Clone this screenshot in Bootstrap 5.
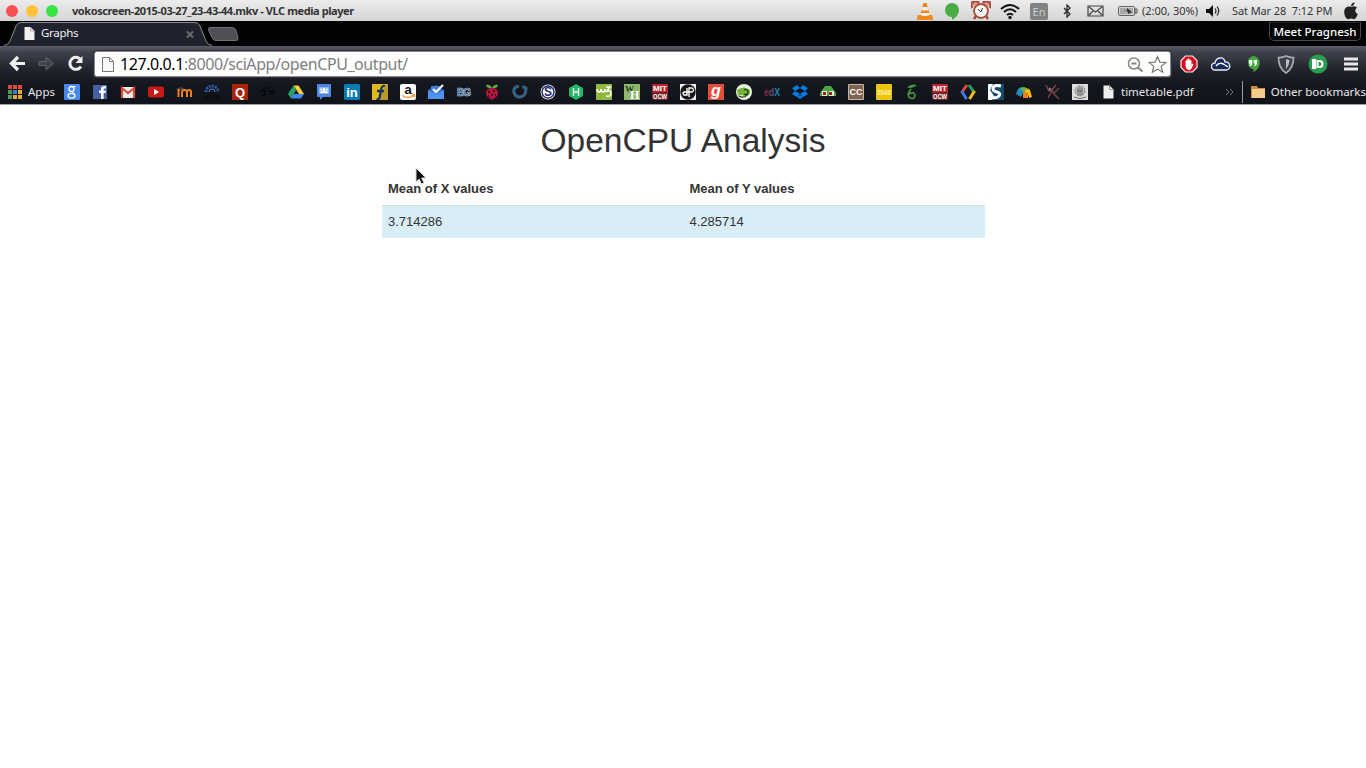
<!DOCTYPE html>
<html lang="en">
<head>
<meta charset="utf-8">
<title>Graphs</title>
<link href="https://cdn.jsdelivr.net/npm/bootstrap@5.3.0/dist/css/bootstrap.min.css" rel="stylesheet">
<style>
body{font-family:"Liberation Sans",Arial,sans-serif;font-size:13px;color:#333;background:#fff;overflow:hidden}
svg{display:block;flex:none}
.ui{font-family:"Noto Sans","Open Sans",sans-serif;white-space:nowrap}
.ui span{line-height:16px}
.titlebar{height:21px;background:linear-gradient(#ececec,#d5d5d5);color:#333}
.titlebar .caption{font-size:11px;font-weight:700;letter-spacing:-.42px;margin-left:14px}
.dot{width:12px;height:12px;border-radius:50%;margin-right:8px}
.tray{font-size:11px}
.tabstrip{height:25px;background:#020303}
.tab-active{width:212px;height:25px}
.tab-label{position:absolute;left:41px;top:4px;font-size:11.5px;letter-spacing:-.3px;color:#f2f2f2}
.user{height:19px;width:92px;margin-right:5px;border:1px solid #45474a;border-top-color:#26282b;border-radius:0 0 5px 5px;color:#fff;font-size:11.5px;font-weight:500}
.toolbar-area{height:59px;background:linear-gradient(#5c5d67,#3f414c 6px,#24262f 22px,#15171f 38px,#11131b);border-bottom:1px solid #a3a3a6}
.address{margin-left:10px;margin-top:5px;width:1077px;height:26px;background:#fff;border:1px solid #85868b;border-radius:3px;box-shadow:0 0 0 1px #30323a}
.address .url{font-size:16px;color:#808080;letter-spacing:-.43px;line-height:24px}
.address b{font-weight:400;color:#000}
.bookmarks{height:24px;color:#e8e8e8;font-size:11.5px}
.icons{gap:12px;margin-left:12px}
.sheet{width:603px;margin-top:17px}
.sheet h1{font-size:33.5px;line-height:37px;font-weight:400;letter-spacing:0;margin-bottom:13px}
.means{table-layout:fixed;--bs-table-bg:transparent;color:#333;line-height:18px;margin:0}
.means th,.means td{padding:7px 6.5px;border:0;color:#333}
.means th{height:33px}
.means td{background:#d9edf7;border-top:1px solid #cddfe7;height:33px}
.pointer{position:absolute;left:415px;top:167px}
text{font-family:"Liberation Sans",sans-serif;font-weight:700}
</style>
</head>
<body>
<header class="ui">
<div class="titlebar d-flex align-items-center">
  <div class="dot" style="background:#f84f55;margin-left:6px"></div><div class="dot" style="background:#fdc437"></div><div class="dot me-0" style="background:#35e545"></div>
  <span class="caption" id="cap">vokoscreen-2015-03-27_23-43-44.mkv - VLC media player</span>
  <div class="tray d-flex align-items-center ms-auto">
    <svg width="18" height="20" viewBox="0 0 18 20"><path d="M2 14h14l1.5 5H.5z" fill="#f18a1b"/><path d="M7.5 2h3l3.7 13q-5 2.5-10.400 0z" fill="#ee8322"/><path d="M6.500 6h5l1 3.500h-7zM4.600 12h8.800l.5 2q-5 2-9.800 0z" fill="#f5f1ea"/></svg>
    <svg style="margin-left:10px" width="16" height="20" viewBox="0 0 16 20"><path d="M8 2a7 7 0 0 1 7 7c0 5-4 8-7 10v-3A7 7 0 0 1 8 2" fill="#4aac43"/></svg>
    <svg style="margin-left:11px" width="20" height="20" viewBox="0 0 20 20"><path d="M1 7a4 4 0 0 1 7-5M12 2a4 4 0 0 1 7 5M5 15l-2 3M15 15l2 3" stroke="#a64b3c" stroke-width="2.500" fill="#d99b8c"/><circle cx="10" cy="10" r="7" fill="#f9f5f3" stroke="#a84a3d" stroke-width="1.800"/><path d="M7 8l3 3 1.500-4" stroke="#333" fill="none"/></svg>
    <svg style="margin-left:9px" width="20" height="18" viewBox="0 0 20 18"><g fill="none" stroke="#111" stroke-width="2"><path d="M1 7q9-8 18 0M4 10q6-5.500 12 0M7 13q3-2.500 6 0"/></g><circle cx="10" cy="15.500" r="1.700" fill="#111"/></svg>
    <svg style="margin-left:10px" width="18" height="18" viewBox="0 0 18 18"><rect width="18" height="17" y="1" rx="2" fill="#828282"/><text x="9" y="13.500" font-size="11" text-anchor="middle" fill="#ccc" style="font-weight:400;font-family:'Noto Sans'">En</text></svg>
    <svg style="margin-left:15px" width="8" height="14" viewBox="0 0 8 14"><path d="M1 4l6 6-3 3V1l3 3-6 6" fill="none" stroke="#2b2b2b" stroke-width="1.300"/></svg>
    <svg style="margin-left:16px" width="17" height="12" viewBox="0 0 17 12"><path d="M1 1h15v10H1zM2 2l6.500 5L15 2M2 10l4-4M15 10l-4-4" fill="none" stroke="#444" stroke-width="1.200"/></svg>
    <svg style="margin-left:14px" width="20" height="10" viewBox="0 0 20 10"><rect x=".6" y=".6" width="16" height="8.800" rx="1" fill="none" stroke="#555"/><path d="M17 3h2v4h-2z" fill="none" stroke="#555"/><path d="M2 2h13v6H2z" fill="#aaa"/><path d="M4 3l5 2V2l5 4-4 2V6z" fill="#333"/></svg>
    <span id="bat" style="margin-left:4px;width:64px">(2:00, 30%)</span>
    <svg width="14" height="12" viewBox="0 0 14 12"><path d="M0 4h3l4-4v12L3 8H0z" fill="#111"/><path d="M9 3.500q2 2.500 0 5M11 1.500q3.500 4.500 0 9" fill="none" stroke="#222" stroke-width="1.200"/></svg>
    <span id="clk" style="margin-left:12px;width:111px;letter-spacing:-.1px">Sat Mar 28&nbsp; 7:12 PM</span>
    <svg style="margin-right:7px" width="16" height="18" viewBox="0 0 16 18"><path d="M8.500 5c2-1.200 4-1 5.500.8-2.500 1.700-2.200 5 .8 6.200C13.500 15.500 12 18 10 17c-1.500-.7-2.300-.6-3.700 0C3 18 1 13 1.200 9.500 1.500 5 5 3.800 8.500 5M8 4.200C8 2 9.500.5 11.500.2 11.600 2.500 10 4.200 8 4.200" fill="#222"/></svg>
  </div>
</div>
<div class="tabstrip d-flex align-items-start">
  <div class="tab-active position-relative">
    <svg width="212" height="25" viewBox="0 0 212 25"><path d="M4 25Q8 25 10 20L16 5Q17.500 1.500 21 1.500H195Q198.500 1.500 200 5L206 20Q208 25 212 25z" fill="#20232e"/><path d="M4 24.500Q8 24.500 10 20L16 5Q17.500 1.500 21 1.500H195Q198.500 1.500 200 5L206 20Q208 24.500 212 24.500" fill="none" stroke="#8b8c91"/><path d="M24.500 6h6l4 4v9h-10z" fill="#f1f1f1"/><path d="M30.500 6v4h4" fill="none" stroke="#aaa"/><path d="M187 10.500l6 6M193 10.500l-6 6" stroke="#696b72" stroke-width="2"/></svg>
    <span class="tab-label">Graphs</span>
  </div>
  <svg style="margin-left:-5px" width="32" height="25" viewBox="0 0 32 25"><path d="M3 6.500h22q3 0 4 3l2 7q.5 3-2 3H9q-3 0-4-3L1.500 9q-.5-2.500 1.500-2.500" fill="#505157" stroke="#707176"/></svg>
  <div class="user d-flex align-items-center justify-content-center ms-auto" style="margin-top:1px"><span id="usr">Meet Pragnesh</span></div>
</div>
<div class="toolbar-area">
  <div class="d-flex align-items-start" style="height:34px">
    <svg style="margin:9px 0 0 9px" width="17" height="17" viewBox="0 0 17 17"><path d="M9 2L2.500 8.500 9 15M3 8.500h13" fill="none" stroke="#eee" stroke-width="3.200"/></svg>
    <svg style="margin:9px 0 0 12px" width="17" height="17" viewBox="0 0 17 17"><path d="M1 6.500h7V2l7.500 6.500L8 15v-4.500H1z" fill="#3f424b" stroke="#62646c"/></svg>
    <svg style="margin:9px 0 0 12px" width="17" height="17" viewBox="0 0 17 17"><path d="M13.500 4.500A6 6 0 1 0 14 11.500" fill="none" stroke="#eee" stroke-width="3"/><path d="M15.500 1v7h-7z" fill="#eee"/></svg>
    <div class="address d-flex align-items-center">
      <svg style="margin-left:7px" width="12" height="15" viewBox="0 0 12 15"><path d="M.5.5h7l4 4v10H.5zM7.500.5v4h4" fill="#f7f7f7" stroke="#777"/></svg>
      <span class="url" id="url" style="margin-left:6px"><b>127.0.0.1</b>:8000/sciApp/openCPU_output/</span>
      <svg class="ms-auto" width="17" height="17" viewBox="0 0 17 17"><circle cx="7" cy="7.500" r="5.500" fill="none" stroke="#858585" stroke-width="1.500"/><path d="M4.500 7.500h5M11 11.500l4.500 4" stroke="#858585" stroke-width="2"/></svg>
      <svg style="margin:0 3px 0 4px" width="19" height="19" viewBox="0 0 19 19"><path d="M9.500 1.500l2.300 5.600 6 .4-4.600 3.900 1.500 5.900-5.200-3.200-5.200 3.200 1.500-5.900L1.200 7.500l6-.4z" fill="#fff" stroke="#777" stroke-width="1.200"/></svg>
    </div>
    <svg style="margin:9px 0 0 9px" width="18" height="18" viewBox="0 0 18 18"><path d="M5.500 1h7L17 5.500v7L12.500 17h-7L1 12.500v-7z" fill="#d60f1c" stroke="#f4e4e4" stroke-width="1.200"/><path d="M5.500 9V6h1V4.500h1.300V3.500h1.300v1h1.200v1h1.200V10l1-1.500 1 .5-2 4.500-1.500 1.500H8L6 13z" fill="#fff"/></svg>
    <svg style="margin:11px 0 0 13px" width="20" height="14" viewBox="0 0 20 14"><path d="M4 13a3.500 3.500 0 0 1 0-7C5 0 13-1 14 5c5-.5 7 7 1.500 8z" fill="#16295c" stroke="#e8ebf3" stroke-width="1.300"/><path d="M5 9q4-5 9-1l3 2" fill="none" stroke="#fff" stroke-width="1.500"/></svg>
    <svg style="margin:9px 0 0 14px" width="16" height="18" viewBox="0 0 16 18"><path d="M8 1a6.800 6.800 0 0 1 6.800 6.800c0 5-4 8-6.300 9.500v-3A6.800 6.800 0 0 1 8 1" fill="#44a83b"/><path d="M4 5h3.200v4L5.500 11H4.300L5.500 8.500H4zM8.800 5H12v4l-1.700 2H9.100l1.200-2.500H8.800z" fill="#fff"/></svg>
    <svg style="margin:9px 0 0 16px" width="18" height="19" viewBox="0 0 18 19"><path d="M9 1q4 1.800 7.500 1.500 0 11-7.500 15.500Q1.500 13.500 1.500 2.500 5 2.800 9 1z" fill="#3b3e46" stroke="#aaacb0" stroke-width="1.700"/><path d="M9 4l3.500 1q-.5 6-3.500 9z" fill="#b9bbc0"/></svg>
    <svg style="margin:8px 0 0 13px" width="20" height="20" viewBox="0 0 20 20"><circle cx="10" cy="10" r="9.500" fill="#2a9d4f"/><path d="M5 6h2v8H5zM9.500 7h2a3 3 0 0 1 0 6h-2z" fill="none" stroke="#fff" stroke-width="2"/></svg>
    <svg style="margin:11px 0 0 16px" width="14" height="14" viewBox="0 0 14 14"><path d="M0 2h14M0 7h14M0 12h14" stroke="#e7e7e8" stroke-width="3"/></svg>
  </div>
  <div class="bookmarks d-flex align-items-center">
    <svg style="margin-left:8px" width="14" height="14" viewBox="0 0 14 14"><path d="M0 0h4v4H0zM5 0h4v4H5zM10 0h4v4h-4z" fill="#df493f"/><path d="M0 5h4v4H0zM0 10h4v4H0z" fill="#4c9c56"/><path d="M5 5h4v4H5z" fill="#3a7ed5"/><path d="M10 5h4v4h-4zM5 10h4v4H5zM10 10h4v4h-4z" fill="#e5ae30"/></svg>
    <span id="apps" style="margin-left:6px;width:24px">Apps</span>
    <div class="icons d-flex">
      <svg width="16" height="16"><rect width="16" height="16" rx="1" fill="#4787ed"/><circle cx="7.500" cy="5" r="2.500" fill="none" stroke="#fff" stroke-width="1.300"/><ellipse cx="7.500" cy="11.700" rx="3.500" ry="2.400" fill="none" stroke="#fff" stroke-width="1.300"/><path d="M8 2.500h4M8 7.500q2 1 2 2" stroke="#fff" fill="none"/></svg>
      <svg width="16" height="16"><rect x="1" y="1" width="14" height="14" fill="#4460a0"/><path d="M9 15V9H7V6.500h2V5q0-3 3-3h2v2.500h-1.500q-1 0-1 1v1H14L13.600 9h-2v6z" fill="#fff"/></svg>
      <svg width="16" height="16"><path d="M1 3h14v11H1z" fill="#ededed"/><path d="M2 14V4l6 5 6-5v10" fill="none" stroke="#d84a3e" stroke-width="2.200"/></svg>
      <svg width="16" height="16"><rect y="2.500" width="16" height="11" rx="2" fill="#c51a18"/><path d="M6 5l5 3-5 3z" fill="#fff"/></svg>
      <svg width="16" height="16"><path d="M0 5l5-2 4 2-6 2" fill="#444"/><path d="M2.500 13V5M6 13V8q0-2 2.500-2T11 8v5M11 8q0-2 2-2t2 2v5" fill="none" stroke="#ed7f22" stroke-width="2"/></svg>
      <svg width="16" height="16"><path d="M2 8a6 6 0 0 1 12 0" fill="none" stroke="#2a57a3" stroke-width="3" stroke-dasharray="2 1"/><path d="M5 8a3 3 0 0 1 6 0" fill="none" stroke="#6289c7"/><text x="8" y="16" font-size="8" text-anchor="middle" textLength="15" fill="#07080b">IITB</text></svg>
      <svg width="16" height="16"><path d="M0 0h16v16H0z" fill="#a82409"/><text x="8" y="12.500" font-size="13" text-anchor="middle" fill="#fff">Q</text></svg>
      <svg width="16" height="16"><path d="M2 4h7M0 8l5-2v5H1M8 7h3v4M13 5v6" fill="none" stroke="#08090c" stroke-width="1.500"/></svg>
      <svg width="16" height="16"><path d="M5.500 1.500h5L16 10h-5z" fill="#f8ce3b"/><path d="M5.500 1.500L8 6l-5 8.500L0 10z" fill="#23a269"/><path d="M5.500 10H16l-3 4.500H3z" fill="#4386ed"/></svg>
      <svg width="16" height="16"><path d="M1 0h14v13H7l-3 3v-3H1z" fill="#4b86e3"/><path d="M3 3h10v7H3z" fill="#8bb5f2"/><path d="M4 9q0-2 2-2 2-2 4 0 2 0 2 2z" fill="#fff"/><circle cx="5" cy="5.500" r="1" fill="#fff"/><circle cx="8" cy="5" r="1.300" fill="#fff"/><circle cx="11" cy="5.500" r="1" fill="#fff"/></svg>
      <svg width="16" height="16"><rect width="16" height="16" rx="1.500" fill="#087bb2"/><text x="8" y="13" font-size="13" text-anchor="middle" fill="#fff">in</text></svg>
      <svg width="16" height="16"><path d="M0 0h16v16H0z" fill="#dfb91d"/><path d="M15 0L5 16h11V0z" fill="#b99a22"/><path d="M13 2q-3-1-4 4L7.500 14q-1 2-3 1M5 7h7" fill="none" stroke="#173264" stroke-width="2.300"/></svg>
      <svg width="16" height="16"><rect width="16" height="16" rx="2" fill="#fff"/><text x="8" y="10" font-size="13" text-anchor="middle" fill="#111">a</text><path d="M2 11.500q6 4 12 0M11.500 11h3v2" fill="none" stroke="#f4982c" stroke-width="1.500"/></svg>
      <svg width="16" height="16"><path d="M0 6l8-5 8 5v9H0z" fill="#2663bd"/><path d="M3 2h10v9H3z" fill="#3f7cd5"/><path d="M0 6l8 5 8-5v9H0z" fill="#4f92ef"/><path d="M5 5l3 3 7-7" fill="none" stroke="#fff" stroke-width="2"/></svg>
      <svg width="16" height="16"><text x="1" y="12" font-size="10" textLength="14" fill="#173757" stroke="#a8c6df" stroke-width=".7">BG</text></svg>
      <svg width="16" height="16"><path d="M8 4Q3 5 2 1q4-1 6 3 2-4 6-3-1 4-6 3" fill="#63aa3f"/><path d="M8 4c8 0 7 8 3 10l-3 2-3-2C1 12 0 4 8 4" fill="#b71340"/><path d="M4 8h2M9 7h2M7 11h2M11 11h1M4 12h1" stroke="#3b0717" stroke-width="2"/></svg>
      <svg width="16" height="16"><path d="M7 2.500H5Q1 4 2 9q3 6 9 3 3-2 3-8-1-1-4-1" fill="none" stroke="#39627e" stroke-width="3"/></svg>
      <svg width="16" height="16"><circle cx="8" cy="8" r="7.500" fill="#fff"/><circle cx="8" cy="8" r="6" fill="#fff" stroke="#252c72" stroke-width="1.500"/><text x="8" y="12.200" font-size="12" text-anchor="middle" fill="#252c72">S</text></svg>
      <svg width="16" height="16"><path d="M8 0l7 4v8l-7 4-7-4V4z" fill="#22b566"/><path d="M5.500 4v8M10.500 4v8M5.500 8h5" stroke="#e9fff0" stroke-width="1.500"/></svg>
      <svg width="16" height="16"><path d="M0 0h16v16H0z" fill="#90b83e"/><path d="M1 5q0 3 2 3t2-3q0 3 2 3t2-3M10 3h4l-3 4q4-1 4 2.500T10 12" fill="none" stroke="#fff" stroke-width="1.600"/></svg>
      <svg width="16" height="16"><path d="M0 0h16v16H0z" fill="#8eb76c"/><text x="1" y="8" font-size="9" fill="#263c22" style="font-family:'Liberation Serif'">W</text><text x="6" y="15" font-size="12" fill="#fff" style="font-family:'Liberation Serif'">H</text></svg>
      <svg width="16" height="16"><path d="M0 0h16v8H0z" fill="#ba242a"/><path d="M0 8h16v8H0z" fill="#77272b"/><text x="1" y="7" font-size="8" textLength="14" lengthAdjust="spacingAndGlyphs" fill="#fff">MIT</text><text x="1" y="15" font-size="8" textLength="14" lengthAdjust="spacingAndGlyphs" fill="#fff">OCW</text></svg>
      <svg width="16" height="16"><path d="M0 0h16v16H0z" fill="#ededed"/><circle cx="8" cy="8" r="7.700" fill="#171717"/><path d="M7 4v7H4q-2-2 0-3h4M9 13V4h3q3 2 0 4H8" fill="none" stroke="#fff" stroke-width="1.400"/></svg>
      <svg width="16" height="16"><path d="M0 0h16v16H0z" fill="#e44e36"/><text x="8" y="12" font-size="16" font-style="italic" text-anchor="middle" fill="#fff">g</text></svg>
      <svg width="16" height="16"><circle cx="8" cy="8" r="8" fill="#eef1e6"/><path d="M1 6q7-5 13 0v3q-2 4-6 3-3-2-6 0" fill="#74b537"/><path d="M8 6a2.500 2.500 0 1 1 0 4M3 12q5 3 9-2" fill="none" stroke="#1d3c17" stroke-width="1.200"/></svg>
      <svg width="16" height="16"><text x="0" y="12" font-size="11" textLength="16" lengthAdjust="spacingAndGlyphs"><tspan fill="#8b2451">e</tspan><tspan fill="#5b5160">d</tspan><tspan fill="#1587be">X</tspan></text></svg>
      <svg width="16" height="16"><path d="M5 1l3 3-5 3-3-3zM11 1L8 4l5 3 3-3zM3 7L0 10l5 3 3-3zM13 7l3 3-5 3-3-3zM5 13l3-2 3 2-3 2z" fill="#087ce6"/></svg>
      <svg width="16" height="16"><path d="M5 2h6l5 7v3H0V9z" fill="#46a940"/><path d="M2 7h5v5H2zM9 7h5v5H9z" fill="#efe9db"/><path d="M3 8h3v3H3zM9 8h3v3H9z" fill="#a31a1a"/></svg>
      <svg width="16" height="16"><path d="M.5.5h15v15H.5z" fill="#82634d" stroke="#c1b5ac"/><text x="8" y="11" font-size="9" text-anchor="middle" fill="#fff">CC</text></svg>
      <svg width="16" height="16"><rect width="16" height="16" rx="1" fill="#edc50e"/><text x="1" y="10.500" font-size="7" textLength="14" lengthAdjust="spacingAndGlyphs" fill="#fff4b7">2048</text></svg>
      <svg width="16" height="16"><path d="M11 1Q8 4 5 3q4-3 7-1M7 5q-5 6-1 9 5 2 5-3-1-4-6-1" fill="none" stroke="#4c9b3b" stroke-width="1.600"/></svg>
      <svg width="16" height="16"><path d="M0 0h16v8H0z" fill="#ba242a"/><path d="M0 8h16v8H0z" fill="#77272b"/><text x="1" y="7" font-size="8" textLength="14" lengthAdjust="spacingAndGlyphs" fill="#fff">MIT</text><text x="1" y="15" font-size="8" textLength="14" lengthAdjust="spacingAndGlyphs" fill="#fff">OCW</text></svg>
      <svg width="16" height="16"><path d="M7 1L2 8" stroke="#df493b" stroke-width="3"/><path d="M1.500 7l5 8" stroke="#4278e4" stroke-width="3"/><path d="M9 1l5.500 8" stroke="#21a25d" stroke-width="3"/><path d="M14.500 7l-5 8" stroke="#efbc25" stroke-width="3"/></svg>
      <svg width="16" height="16"><path d="M0 0h16v16H0z" fill="#134a6b"/><path d="M0 0h5l-3 6 4 6-2 4H0z" fill="#fff"/><path d="M13 2Q5 0 5 5q0 2 4 3 4 1 2 4-3 3-8 1" fill="none" stroke="#fff" stroke-width="3"/></svg>
      <svg width="16" height="16"><path d="M0 10q2-8 7-7l3 4-3 2-2 4z" fill="#278dbb"/><path d="M4 5l4-2 5 2-4 4z" fill="#68b646"/><path d="M8 8q4-5 6-2l2 7-3 1q0-4-5-6" fill="#f5bd16"/><path d="M7 8l5 1v5H7z" fill="#ee811d"/></svg>
      <svg width="16" height="16"><path d="M2 1l3 6 3-1 4-5M8 6l2 4 5 5M8 7l-4 7M10 9l5-5" fill="none" stroke="#754146" stroke-width="1.500"/><circle cx="6" cy="5" r="1.500" fill="#8b7474"/></svg>
      <svg width="16" height="16"><path d="M0 0h16v16H0z" fill="#ddd"/><circle cx="8" cy="7" r="5" fill="#bcbcbc" stroke="#777" stroke-dasharray="2 1"/><path d="M5 7h6M6 4v7M8 3v9M10 4v7M2 13q6 3 12 0" stroke="#696969" fill="none"/></svg>
    </div>
    <svg style="margin-left:15px" width="12" height="14" viewBox="0 0 12 14"><path d="M.5.5h6l4 4v9H.5z" fill="#eee"/><path d="M6.500.5v4h4" fill="none" stroke="#999"/></svg>
    <span id="pdf" style="margin-left:6px;width:105px">timetable.pdf</span>
    <svg width="9" height="8" viewBox="0 0 9 8"><path d="M1 1l3 3-3 3M5 1l3 3-3 3" fill="none" stroke="#777981"/></svg>
    <div style="width:1px;height:22px;margin-left:8px;background:#999ba1"></div>
    <svg style="margin-left:8px" width="15" height="14" viewBox="0 0 15 14"><path d="M0 1h6l1 2h7v10H0z" fill="#c88e43"/><path d="M1 4h13v9H1z" fill="#f4cd8b"/></svg>
    <span id="oth" style="margin-left:5px">Other bookmarks</span>
  </div>
</div>
</header>
<main class="sheet mx-auto">
  <h1 class="text-center">OpenCPU Analysis</h1>
  <table class="table means">
    <thead><tr><th>Mean of X values</th><th>Mean of Y values</th></tr></thead>
    <tbody><tr><td>3.714286</td><td>4.285714</td></tr></tbody>
  </table>
</main>
<svg class="pointer" width="13" height="19" viewBox="0 0 13 19"><path d="M1 1v14l3.200-3 2.300 5 2.500-1.200-2.400-4.800H11z" fill="#111" stroke="#ddd"/></svg>
<script src="https://cdn.jsdelivr.net/npm/bootstrap@5.3.0/dist/js/bootstrap.bundle.min.js"></script>
</body>
</html>
